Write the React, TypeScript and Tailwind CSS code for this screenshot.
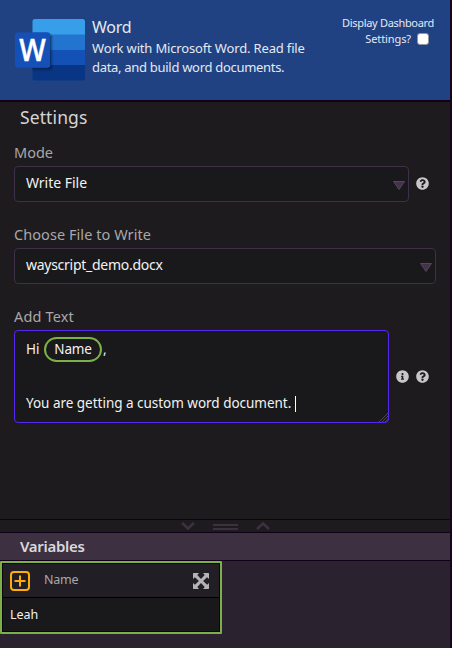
import React from "react";
import { FaInfoCircle, FaQuestionCircle } from "react-icons/fa";

function WordLogo() {
  return (
    <svg width="76" height="66" viewBox="0 0 76 66" className="block shrink-0">
      <defs>
        <clipPath id="page"><rect x="18.5" y="2" width="52.5" height="61.5" rx="2.5" /></clipPath>
        <filter id="shade" x="-20%" y="-20%" width="150%" height="150%">
          <feDropShadow dx="1.5" dy="2" stdDeviation="1.2" floodColor="#000b2c" floodOpacity="0.65" />
        </filter>
      </defs>
      <g clipPath="url(#page)">
        <rect x="18" y="2" width="53" height="16" fill="#379fe9" />
        <rect x="18" y="17.5" width="53" height="16" fill="#2374cf" />
        <rect x="18" y="33" width="53" height="15.5" fill="#1351b7" />
        <rect x="18" y="48" width="53" height="16" fill="#083684" />
        <rect x="1" y="15.5" width="35" height="35" rx="2.5" fill="#1351b7" filter="url(#shade)" />
      </g>
      <rect x="1" y="15.5" width="35" height="35" rx="2.5" fill="#1450b8" />
      <text x="5.2" y="43.7" textLength="26.5" lengthAdjust="spacingAndGlyphs" fill="#fff" stroke="#fff" strokeWidth=".4" fontSize="30" fontWeight="600" fontFamily="Open Sans, sans-serif">W</text>
    </svg>
  );
}

function Triangle() {
  return (
    <svg width="12" height="9" viewBox="0 0 12 9" className="block">
      <path d="M.5.5h11L6 8.5Z" fill="#43334a" stroke="#65566c" strokeWidth=".7" />
    </svg>
  );
}

function ExpandArrows() {
  return (
    <svg width="16" height="16" viewBox="0 0 16 16" className="block" fill="#b5b3b6">
      <path d="M.5 0H6L4.3 1.9 8 5.9l3.7-4L10 0h5.5l.5.5V6l-1.9-1.7L10.1 8l4 3.7L16 10v5.5l-.5.5H10l1.7-1.9-3.7-4-3.7 4L6 16H.5l-.5-.5V10l1.9 1.7L5.9 8l-4-3.7L0 6V.5ZM8 7.2 7.2 8l.8.8.8-.8Z" fillRule="evenodd" />
      <rect x="7" y="7" width="2" height="2" />
    </svg>
  );
}

function Select({ value, width }: { value: React.ReactNode; width: string }) {
  return (
    <div className={`flex h-9 items-center justify-between rounded border border-[#3d3047] bg-[#19191b] pl-[11px] pr-[3px] text-[14px] text-[#f2f2f2] ${width}`}>
      <div className="-mt-[3px]">{value}</div>
      <div className="mt-0.5"><Triangle /></div>
    </div>
  );
}

export default function App() {
  return (
    <div className="flex h-[648px] w-[452px] flex-col overflow-hidden border-r-2 border-[#17051d] bg-[#1d1b1e] font-['Noto_Sans',sans-serif]">
      <header className="flex h-[102px] shrink-0 border-b-2 border-[#160018] bg-[#204283] pl-[14px] pt-[17px] text-[#e4e9f2]">
        <WordLogo />
        <div className="ml-[2px] w-[235px] shrink-0 whitespace-nowrap">
          <div className="h-[21px] text-[16px] leading-[21px] tracking-[-0.3px]">Word</div>
          <div className="text-[13px] leading-[20px]">
            <div className="tracking-[-0.16px]">Work with Microsoft Word. Read file</div>
            <div className="-mt-px tracking-[-0.3px]">data, and build word documents.</div>
          </div>
        </div>
        <div className="-mt-[2px] flex flex-1 flex-col items-end whitespace-nowrap pr-4 text-[11px] leading-4">
          <div className="tracking-[-0.32px]">Display Dashboard</div>
          <div className="flex items-center pr-[5px]">
            <span className="mr-[6px] tracking-[-0.1px]">Settings?</span>
            <span className="h-3 w-3 rounded-[3px] border border-[#93969e] bg-white" />
          </div>
        </div>
      </header>

      <main className="h-[417px] shrink-0 pl-[14px] text-[#a9a7aa]">
        <h1 className="h-[38px] pl-[6px] pt-[2px] text-[17.5px] leading-[26px] tracking-[0.1px] text-[#d5d4d6]">Settings</h1>
        <div className="h-[26px] text-[14.5px] leading-[24px]">Mode</div>
        <div className="flex items-center">
          <Select width="w-[395px]" value={<span className="tracking-[-0.02px]">Write File</span>} />
          <FaQuestionCircle className="-mt-0.5 ml-[7px] text-[13px] text-[#c7c7c7]" />
        </div>
        <div className="mt-[20px] h-[26px] text-[14.5px] leading-[24px] tracking-[0.06px]">Choose File to Write</div>
        <Select width="w-[422px]" value={<span className="tracking-[-0.27px]">wayscript_demo.docx</span>} />
        <div className="mt-[20px] h-[26px] text-[14.5px] leading-[24px] tracking-[0.15px]">Add Text</div>
        <div className="flex items-center">
          <div className="relative h-[93px] w-[375px] rounded border border-[#5528ef] bg-[#19191b] pl-[11px] pt-[5px] text-[13.5px] text-[#f2f2f2]">
            <div className="flex h-[27px] items-center whitespace-pre">
              <span className="w-[18px]">Hi</span>
              <span className="flex h-[25px] w-[58px] items-center justify-center rounded-full border-2 border-[#7eb04a] tracking-[-0.2px]">Name</span>
              <span className="ml-px">,</span>
            </div>
            <div className="mt-[27px] flex h-[27px] items-center">
              <span className="tracking-[-0.02px]">You are getting a custom word document.</span>
              <span className="ml-[4px] h-4 w-px bg-white" />
            </div>
            <svg width="9" height="9" viewBox="0 0 9 9" className="absolute bottom-0 right-0">
              <path d="M0 9 9 0M3 9l6-6M6 9l3-3" stroke="#59545f" strokeWidth=".8" />
            </svg>
          </div>
          <FaInfoCircle className="-mt-px ml-[7px] text-[13px] text-[#c7c7c7]" />
          <FaQuestionCircle className="-mt-px ml-[7px] text-[13px] text-[#c7c7c7]" />
        </div>
      </main>

      <div className="flex h-[14px] shrink-0 items-center justify-center gap-[18px] border-y border-[#10001a]">
        <svg width="14" height="8" viewBox="0 0 14 8" fill="none" stroke="#3d3041" strokeWidth="2.6"><path d="m1 1 6 5.5L13 1" /></svg>
        <span className="mt-px h-[6px] w-[25px] border-y-2 border-[#3d3041]" />
        <svg width="14" height="8" viewBox="0 0 14 8" fill="none" stroke="#3d3041" strokeWidth="2.6"><path d="m1 7 6-5.5L13 7" /></svg>
      </div>

      <h2 className="h-7 shrink-0 border-b border-[#10001a] bg-[#3d3041] pl-5 text-[15px] font-semibold leading-[27px] tracking-[-0.3px] text-[#dad8db]">Variables</h2>
      <section className="flex-1 bg-[#2a222e]">
        <div className="h-[73px] w-[222px] rounded-[1px] border-2 border-[#7eb04a]">
          <div className="h-full border border-[#08070a] bg-[#19191b]">
            <div className="flex h-[34px] items-center border-b border-black bg-[#211f25] pl-[7px] pr-[10px] text-[12.5px] text-[#aaa8ab]">
              <svg width="20" height="20" viewBox="0 0 20 20" fill="none" stroke="#ffad0a" strokeWidth="2"><rect x="1" y="1" width="18" height="18" rx="3" /><path d="M10 4.5v11M4.5 10h11" /></svg>
              <span className="ml-[14px] flex-1 tracking-[-0.2px]">Name</span>
              <ExpandArrows />
            </div>
            <div className="pl-[7px] text-[12.5px] leading-[33px] text-[#f2f2f2]">Leah</div>
          </div>
        </div>
      </section>
    </div>
  );
}
